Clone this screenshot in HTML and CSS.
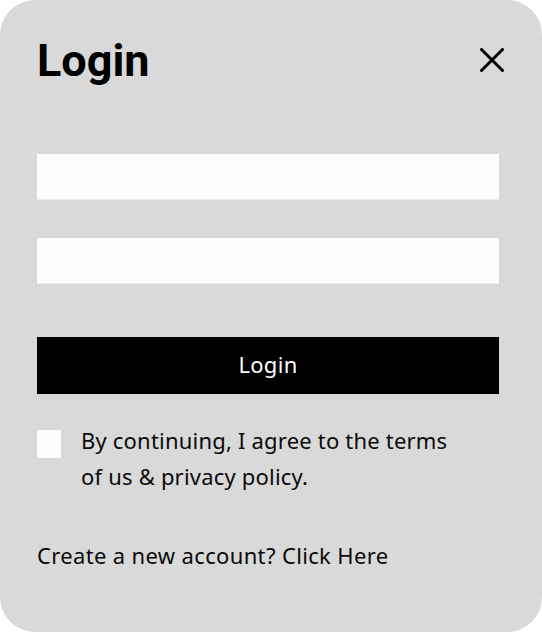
FILE: index.html
```html
<!DOCTYPE html>
<html lang="en">
<head>
<meta charset="utf-8">
<title>Login</title>
<link rel="stylesheet" href="styles.css">
</head>
<body>
<div class="card">
  <div class="header">
    <h1 class="title">Login</h1>
    <button class="close" aria-label="Close">
      <svg width="24" height="24" viewBox="0 0 24 24"><path d="M1.5 1.5 L22.5 22.5 M22.5 1.5 L1.5 22.5" stroke="#000" stroke-width="3" stroke-linecap="round" fill="none"/></svg>
    </button>
  </div>
  <div class="fields">
    <input class="field" type="text">
    <input class="field" type="password">
  </div>
  <button class="submit">Login</button>
  <label class="agree">
    <span class="box"></span>
    <span class="agree-text">By continuing, I agree to the terms<br>of us &amp; privacy policy.</span>
  </label>
  <p class="create">Create a new account? Click Here</p>
</div>
</body>
</html>
```
FILE: styles.css
```css
html, body {
  margin: 0;
  padding: 0;
  background: #ffffff;
}
.card {
  box-sizing: border-box;
  width: 542px;
  height: 632px;
  background: #d9d9d9;
  border-radius: 35px;
  padding: 37px 37px 0 37px;
  display: flex;
  flex-direction: column;
  font-family: "Noto Sans", sans-serif;
  color: #0a0a0a;
}
.header {
  display: flex;
  justify-content: space-between;
  align-items: center;
  height: 48px;
}
.title {
  margin: 0;
  font-family: Roboto, sans-serif;
  font-weight: 700;
  font-size: 45px;
  line-height: 48px;
  color: #000;
}
.close {
  border: 0;
  background: none;
  padding: 0;
  margin-right: 1px;
  margin-top: -2px;
  width: 24px;
  height: 24px;
  display: flex;
}
.fields {
  display: flex;
  flex-direction: column;
  gap: 38px;
  margin-top: 69px;
}
.field {
  box-sizing: border-box;
  width: 462px;
  height: 46px;
  border: 0;
  border-bottom: 1px solid #ececec;
  background: #fefdfb;
  margin: 0;
  padding: 0 12px;
  display: block;
}
.submit {
  margin-top: 53px;
  width: 462px;
  height: 57px;
  background: #000;
  color: #fff;
  border: 0;
  font-family: "Noto Sans", sans-serif;
  font-size: 22px;
  letter-spacing: 0.3px;
  padding: 0 0 4px 0;
}
.agree {
  display: flex;
  gap: 20px;
  margin-top: 28px;
  align-items: flex-start;
}
.box {
  width: 24px;
  height: 28px;
  background: #fefdfb;
  flex: none;
  margin-top: 8px;
}
.agree-text {
  font-size: 22px;
  line-height: 36px;
  letter-spacing: 0.2px;
}
.create {
  margin: 47px 0 0 0;
  font-size: 22px;
  line-height: 28px;
  letter-spacing: 0.35px;
}
```
